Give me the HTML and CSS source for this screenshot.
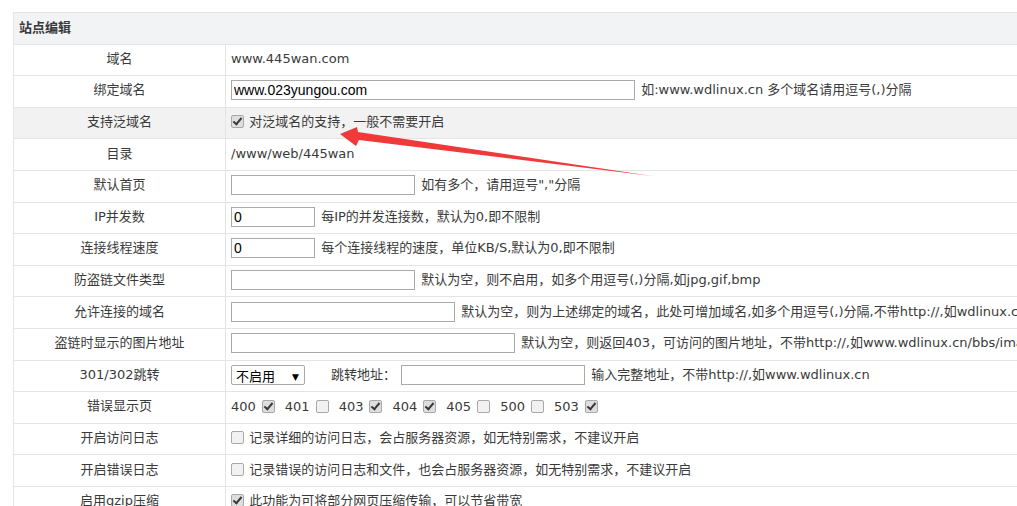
FILE: index.html
```html
<!DOCTYPE html>
<html lang="zh-CN">
<head>
    <meta charset="UTF-8">
    <title>站点编辑</title>
    <link rel="stylesheet" href="styles.css">
</head>
<body>
    <div class="page">
        <table class="site-table">
            <colgroup>
                <col class="col-label">
                <col class="col-value">
            </colgroup>
            <tr class="head-row">
                <th colspan="2">站点编辑</th>
            </tr>
            <tr>
                <td class="label">域名</td>
                <td class="value">www.445wan.com</td>
            </tr>
            <tr>
                <td class="label">绑定域名</td>
                <td class="value"><input type="text" class="field w-bind" value="www.023yungou.com"> 如:www.wdlinux.cn 多个域名请用逗号(,)分隔</td>
            </tr>
            <tr class="hover">
                <td class="label">支持泛域名</td>
                <td class="value"><input type="checkbox" class="check" checked> 对泛域名的支持，一般不需要开启</td>
            </tr>
            <tr>
                <td class="label">目录</td>
                <td class="value">/www/web/445wan</td>
            </tr>
            <tr>
                <td class="label">默认首页</td>
                <td class="value"><input type="text" class="field w-md"> 如有多个，请用逗号","分隔</td>
            </tr>
            <tr>
                <td class="label">IP并发数</td>
                <td class="value"><input type="text" class="field w-sm" value="0"> 每IP的并发连接数，默认为0,即不限制</td>
            </tr>
            <tr>
                <td class="label">连接线程速度</td>
                <td class="value"><input type="text" class="field w-sm" value="0"> 每个连接线程的速度，单位KB/S,默认为0,即不限制</td>
            </tr>
            <tr>
                <td class="label">防盗链文件类型</td>
                <td class="value"><input type="text" class="field w-md"> 默认为空，则不启用，如多个用逗号(,)分隔,如jpg,gif,bmp</td>
            </tr>
            <tr>
                <td class="label">允许连接的域名</td>
                <td class="value"><input type="text" class="field w-lg"> 默认为空，则为上述绑定的域名，此处可增加域名,如多个用逗号(,)分隔,不带http://,如wdlinux.cn</td>
            </tr>
            <tr>
                <td class="label">盗链时显示的图片地址</td>
                <td class="value"><input type="text" class="field w-xl"> 默认为空，则返回403，可访问的图片地址，不带http://,如www.wdlinux.cn/bbs/images/logo.gif</td>
            </tr>
            <tr>
                <td class="label">301/302跳转</td>
                <td class="value">
                    <span class="select-wrap"><select class="select"><option>不启用</option><option>301</option><option>302</option></select></span><span class="redirect-label">跳转地址：</span><input type="text" class="field w-md"> 输入完整地址，不带http://,如www.wdlinux.cn
                </td>
            </tr>
            <tr>
                <td class="label">错误显示页</td>
                <td class="value">
                    <span class="code">400</span><input type="checkbox" class="check" checked><span class="code">401</span><input type="checkbox" class="check"><span class="code">403</span><input type="checkbox" class="check" checked><span class="code">404</span><input type="checkbox" class="check" checked><span class="code">405</span><input type="checkbox" class="check"><span class="code">500</span><input type="checkbox" class="check"><span class="code">503</span><input type="checkbox" class="check" checked>
                </td>
            </tr>
            <tr>
                <td class="label">开启访问日志</td>
                <td class="value"><input type="checkbox" class="check"> 记录详细的访问日志，会占服务器资源，如无特别需求，不建议开启</td>
            </tr>
            <tr>
                <td class="label">开启错误日志</td>
                <td class="value"><input type="checkbox" class="check"> 记录错误的访问日志和文件，也会占服务器资源，如无特别需求，不建议开启</td>
            </tr>
            <tr>
                <td class="label">启用gzip压缩</td>
                <td class="value"><input type="checkbox" class="check" checked> 此功能为可将部分网页压缩传输，可以节省带宽</td>
            </tr>
        </table>

        <!-- annotation arrow -->
        <svg class="arrow" width="1017" height="506" viewBox="0 0 1017 506">
            <polygon points="340,134 357,127 358,132 652,176 359,140 356,146" fill="#f03a3a"></polygon>
        </svg>
    </div>
</body>
</html>
```

FILE: styles.css
```css
:root {
    --border-color: #e4e4e8;
    --head-bg: #f2f3f5;
    --hover-bg: #f2f2f2;
    --text-color: #3a3a3a;
    --input-border: #a9a9a9;
}

html, body {
    margin: 0;
    padding: 0;
    overflow: hidden;
}

body {
    background: #ffffff;
    color: var(--text-color);
    font-family: "DejaVu Sans", "Noto Sans CJK SC", sans-serif;
    font-size: 13px;
}

.page {
    position: relative;
    width: 1017px;
    height: 506px;
    overflow: hidden;
}

.site-table {
    margin: 12px 0 0 13px;
    width: 1200px;
    border-collapse: collapse;
    table-layout: fixed;
}

.col-label { width: 212px; }
.col-value { width: 988px; }

.site-table th,
.site-table td {
    border: 1px solid var(--border-color);
    height: 28.6px;
    padding: 0 5px 2px;
    line-height: 16px;
    white-space: nowrap;
    overflow: hidden;
}

.head-row th {
    background: var(--head-bg);
    text-align: left;
    font-family: "Noto Sans CJK SC", sans-serif;
    font-weight: bold;
    padding-left: 5px;
}

.site-table .label {
    text-align: center;
}

.site-table .value {
    text-align: left;
}

.hover td {
    background: var(--hover-bg);
}

.field {
    box-sizing: border-box;
    height: 20px;
    border: 1px solid var(--input-border);
    padding: 0 2px;
    margin: 0 2px 0 0;
    font-family: "Liberation Sans", "Noto Sans CJK SC", sans-serif;
    font-size: 14px;
    color: #000;
    vertical-align: middle;
    background: #fff;
}

.w-bind { width: 404px; }
.w-sm { width: 84px; }
.w-md { width: 184px; }
.w-lg { width: 224px; }
.w-xl { width: 284px; }

.select-wrap {
    position: relative;
    display: inline-block;
    vertical-align: middle;
}

.select-wrap::after {
    content: "▼";
    position: absolute;
    right: 6px;
    top: 4px;
    font-size: 9px;
    color: #000;
    pointer-events: none;
}

.select {
    -webkit-appearance: none;
    appearance: none;
    box-sizing: border-box;
    width: 74px;
    height: 20px;
    border: 1px solid var(--input-border);
    border-radius: 2px;
    background: #fff;
    padding: 0 0 0 4px;
    font-family: "Noto Sans CJK SC", sans-serif;
    font-size: 13px;
    color: #000;
    display: block;
}

.redirect-label {
    margin-left: 26px;
    margin-right: 5px;
    vertical-align: middle;
}

.check {
    -webkit-appearance: none;
    appearance: none;
    box-sizing: border-box;
    width: 13px;
    height: 13px;
    margin: 0 1px 0 0;
    border: 1px solid #a8a8a8;
    border-radius: 2px;
    background: #f1f1f1;
    vertical-align: -2px;
    position: relative;
}

.check:checked {
    background: #dedede;
}

.check:checked::after {
    content: "";
    position: absolute;
    left: 3px;
    top: 0px;
    width: 3px;
    height: 7px;
    border: solid #3a3a3a;
    border-width: 0 2.5px 2.5px 0;
    transform: rotate(40deg);
}

.code {
    margin-right: 6px;
    vertical-align: middle;
}

.value .code + .check,
.value .check + .code {
    vertical-align: middle;
}

.check + .code {
    margin-left: 9px;
}

.arrow {
    position: absolute;
    top: 0;
    left: 0;
    pointer-events: none;
}
```
